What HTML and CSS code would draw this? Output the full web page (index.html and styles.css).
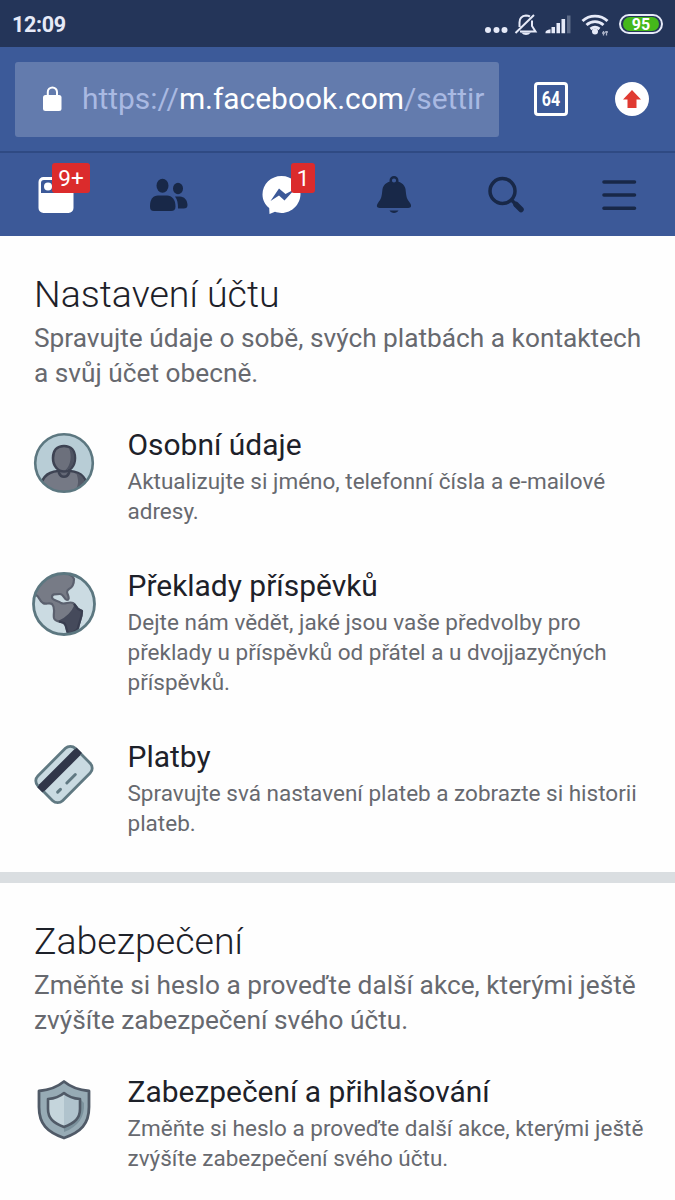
FILE: index.html
```html
<!DOCTYPE html>
<html lang="cs">
<head>
    <meta charset="UTF-8">
    <meta name="viewport" content="width=device-width, initial-scale=1.0">
    <title>Nastavení účtu</title>
    <link rel="stylesheet" href="styles.css">
</head>
<body>
    <div class="status-bar">
        <span class="time">12:09</span>
        <svg class="status-icons" width="136" height="30" viewBox="483 8 136 30">
            <g fill="#e6eaf8">
                <circle cx="488" cy="29" r="3"/><circle cx="496.500" cy="29" r="3"/><circle cx="504.500" cy="29" r="3"/>
                <path d="M545.500 32.300v-1q0-2 5-3v4zM551.500 26h3.500v6.300h-3.500zM556.500 22h3.500v10.300h-3.500zM561.500 18h3.600v14.300h-3.600z"/>
                <path d="M567 14.500h3.500v17.800H567z" opacity=".3"/>
                <path d="M521 31.500h10q-5 5-10 0z"/>
                <circle cx="595" cy="30.500" r="3"/>
            </g>
            <g fill="none" stroke="#e6eaf8" stroke-width="2">
                <path d="M515.500 32l18.500-18M519.500 26v-4.500c0-4 2-6.500 6.500-7 1.500 0 3 .5 4 1M532 19.500V25l3.500 5.500H520"/>
                <path d="M582.500 20c7-6.500 18-6.500 25 0M586.500 24c5-4.500 12-4.500 17 0M590.500 28q4.500-3.500 9 0" stroke-width="2.900"/>
                <path d="M603.500 30v4.500M606.500 30v4.500M602 32h3M605 31h3" stroke-width="1.300" opacity=".7"/>
            </g>
        </svg>
        <span class="battery"><span>95</span></span>
    </div>

    <div class="browser-bar">
        <div class="address">
            <svg class="lock" width="20" height="26" viewBox="0 0 20 26">
                <rect x="1" y="9" width="18.500" height="16" rx="2.500" fill="#fff"/>
                <path d="M5.800 10V6a4.600 4.600 0 0 1 9.200 0v4" fill="none" stroke="#fff" stroke-width="2"/>
            </svg>
            <span class="url">https://<b>m.facebook.com</b>/settir</span>
        </div>
        <span class="tabs"><span>64</span></span>
        <span class="update">
            <svg width="34" height="34" viewBox="0 0 34 34">
                <circle cx="17" cy="17" r="17" fill="#fff"/>
                <path d="M17 8l9 9.500h-4.500V26h-9v-8.500H8z" fill="#e03a31"/>
            </svg>
        </span>
    </div>

    <div class="nav">
        <div class="nav-item">
            <svg width="40" height="40" viewBox="0 0 40 40">
                <path fill="#fff" fill-rule="evenodd" d="M7.500 2h25a5 5 0 0 1 5 5v26a5 5 0 0 1-5 5h-25a5 5 0 0 1-5-5V7a5 5 0 0 1 5-5zM8 5q-3 0-3 3v10h30V8q0-3-3-3z"/>
                <circle cx="12" cy="11.500" r="4" fill="#fff"/>
            </svg>
            <span class="badge badge-feed">9+</span>
        </div>
        <div class="nav-item">
            <svg width="40" height="40" viewBox="0 0 40 40" fill="#182848">
                <ellipse cx="13.500" cy="10.800" rx="6" ry="7"/>
                <path d="M1 31.500C1 24 4 20.500 9 20.500h9c5 0 8.500 4 8.500 11 0 3-1.500 4.500-4.500 4.500H5c-3 0-4-1.500-4-4.500z"/>
                <ellipse cx="29" cy="13.500" rx="5" ry="5.700"/>
                <path d="M26 21.500h5c4 0 7.500 3.500 7.500 8.500 0 2.500-1.200 3.500-4 3.500h-5.500c0-5-.5-9-3-12z"/>
            </svg>
        </div>
        <div class="nav-item">
            <svg width="40" height="40" viewBox="0 0 40 40">
                <path fill="#fff" d="M20.500 1c10.500 0 19 8 19 18s-8.500 19-19 19c-2.500 0-4.500-.5-6.500-1.200L8.500 39l-.3-6C4 29.500 1.500 25 1.500 19.500 1.500 9 10 1 20.500 1z"/>
                <path fill="#3c5998" d="M9.500 26L18 13.500l6.500 5.500 9.500-5-10.500 11.500-5.500-5z"/>
            </svg>
            <span class="badge badge-messages">1</span>
        </div>
        <div class="nav-item">
            <svg width="40" height="40" viewBox="0 0 40 40">
                <path fill="#182848" d="M8.500 14C9.500 9 14 6 20 6s10.500 3 11.500 8c1 9 1 9 4.500 14 2.500 4 .5 5-3 5H7c-3.500 0-5.500-1-3-5 3.500-5 3.500-5 4.500-14zM15.500 35.500h9c-1.500 3.300-7.500 3.300-9 0z"/>
                <circle cx="20" cy="5.500" r="3.300" fill="#3c5998" stroke="#182848" stroke-width="2.400"/>
            </svg>
        </div>
        <div class="nav-item">
            <svg width="40" height="40" viewBox="0 0 40 40" fill="none" stroke="#182848" stroke-linecap="round">
                <circle cx="16.500" cy="16" r="12.500" stroke-width="3.500"/>
                <path d="M26 25.500l3 3" stroke-width="3.500"/>
                <path d="M30 29.500l5 5" stroke-width="5.500"/>
            </svg>
        </div>
        <div class="nav-item">
            <svg width="40" height="40" viewBox="0 0 40 40">
                <path d="M5 7h30.500M5 20h30.500M5 33.300h30.500" stroke="#182848" stroke-width="3.600" stroke-linecap="round"/>
            </svg>
        </div>
    </div>

    <div class="section">
        <h1>Nastavení účtu</h1>
        <p class="lead">Spravujte údaje o sobě, svých platbách a kontaktech<br>a svůj účet obecně.</p>

        <div class="item">
            <svg class="icon" viewBox="0 0 64 64">
                <clipPath id="face"><circle cx="32" cy="32" r="28.500"/></clipPath>
                <circle cx="32" cy="32" r="28.500" fill="#b8cdd6"/>
                <g clip-path="url(#face)" stroke="#3e4353" stroke-width="2.600">
                    <path fill="#757985" d="M8 62c0-14 6-21 18-22h12c12 1 18 8 18 22z"/>
                    <path fill="#555967" stroke="none" d="M44 42c7 2 10 8 10 19H42c5-5 5-13 2-19z"/>
                    <path fill="#646876" d="M27 37v5c2 5 8 5 10 0v-5z"/>
                    <path fill="#6c707c" d="M32 15c7 0 11 4.500 11 12 0 8-5 13.500-11 13.500S21 35 21 27c0-7.500 4-12 11-12z"/>
                    <path fill="#4d5261" stroke="none" d="M37 17c3.500 2 5 5 5 10 0 7-4 11.500-9 12.500 6-5 7-15 4-22.500z"/>
                </g>
                <circle cx="32" cy="32" r="28.800" fill="none" stroke="#5c7780" stroke-width="2.600"/>
            </svg>
            <div class="item-text">
                <h2>Osobní údaje</h2>
                <p>Aktualizujte si jméno, telefonní čísla a e-mailové<br>adresy.</p>
            </div>
        </div>

        <div class="item">
            <svg class="icon" viewBox="0 0 64 64">
                <clipPath id="globe"><circle cx="32" cy="32" r="30"/></clipPath>
                <circle cx="32" cy="32" r="30" fill="#cbdbe2"/>
                <g clip-path="url(#globe)" stroke-width="2.200" stroke-linejoin="round">
                    <path fill="#777b86" stroke="#5b606e" d="M0 20L20-1h14C34 3 41 2 42 7c0 5-1 8-5 10-3 2-2 4-1 6 1 3 1 5-1 5-3 0-3-6-7-6-5 0-8 0-8 3 0 4 6 3 9 6 4 2 8-2 12 0 2 1 3 4 5 6l4 2c0 7-3 11-4 17-1 4-6 3-8 7-5-3-2-9-6-12-4-2-9-1-10-5-1-5 2-10-2-14-3-2-6 1-9-1-4-2-3-6-7-8z"/>
                    <path fill="#454a5b" stroke="none" d="M43 32l3 5 4 2c0 7-3 11-4 17-1 4-6 3-8 7-5-3-2-9-6-12l-6-2q12-5 17-17z"/>
                    <path fill="none" stroke="#393e50" d="M42 32l4 5 4 2c0 7-3 11-4 17-1 4-6 3-8 7-5-3-2-9-6-12l-5-1.500"/>
                </g>
                <circle cx="32" cy="32" r="30.500" fill="none" stroke="#5c7780" stroke-width="2.800"/>
            </svg>
            <div class="item-text">
                <h2>Překlady příspěvků</h2>
                <p>Dejte nám vědět, jaké jsou vaše předvolby pro<br>překlady u příspěvků od přátel a u dvojjazyčných<br>příspěvků.</p>
            </div>
        </div>

        <div class="item">
            <svg class="icon" viewBox="0 0 64 64">
                <g transform="translate(32 31.500) rotate(-45)">
                    <rect x="-26.500" y="-17.500" width="53" height="35" rx="7" fill="#c9dae1"/>
                    <path fill="#303649" d="M-26.500-10.500h53v8.500h-53z"/>
                    <rect x="-26.500" y="-17.500" width="53" height="35" rx="7" fill="none" stroke="#607982" stroke-width="2.800"/>
                    <path fill="#303649" d="M-27.900-10h4v7.500h-4zM23.900-10h4v7.500h-4z"/>
                    <path d="M-17 8h4M-4 8h12" stroke="#607982" stroke-width="3" stroke-linecap="round"/>
                </g>
            </svg>
            <div class="item-text">
                <h2>Platby</h2>
                <p>Spravujte svá nastavení plateb a zobrazte si historii<br>plateb.</p>
            </div>
        </div>
    </div>

    <div class="section">
        <h1>Zabezpečení</h1>
        <p class="lead">Změňte si heslo a proveďte další akce, kterými ještě<br>zvýšíte zabezpečení svého účtu.</p>

        <div class="item">
            <svg class="icon" viewBox="0 0 64 64">
                <path fill="#97abb5" d="M32 3.500c6 5 14 8.500 25 9.500v16c0 17-8 25-25 31C15 54 7 46 7 29V13C18 12 26 8.500 32 3.500z"/>
                <path fill="#7b919c" d="M48 21l4 4c1 14-6 24-20 29v-5c11-4 16-9 16-18z"/>
                <path fill="none" stroke="#505a67" stroke-width="2.800" stroke-linejoin="round" d="M32 3.500c6 5 14 8.500 25 9.500v16c0 17-8 25-25 31C15 54 7 46 7 29V13C18 12 26 8.500 32 3.500z"/>
                <path fill="#c5d5dc" d="M32 15c4 3.500 9 5.500 16 6v10c0 9-5 14-16 18-11-4-16-9-16-18V21c7-.5 12-2.500 16-6z"/>
                <path fill="#b0c3cd" d="M32 15c4 3.500 9 5.500 16 6v10c0 9-5 14-16 18z"/>
                <path fill="none" stroke="#505a67" stroke-width="2.600" stroke-linejoin="round" d="M32 15c4 3.500 9 5.500 16 6v10c0 9-5 14-16 18-11-4-16-9-16-18V21c7-.5 12-2.500 16-6z"/>
            </svg>
            <div class="item-text">
                <h2>Zabezpečení a přihlašování</h2>
                <p>Změňte si heslo a proveďte další akce, kterými ještě<br>zvýšíte zabezpečení svého účtu.</p>
            </div>
        </div>
    </div>
</body>
</html>
```

FILE: styles.css
```css
* {
    box-sizing: border-box;
}
body {
    margin: 0;
    height: 1200px;
    overflow: hidden;
    background: #fefefe;
    color: #1d2129;
    font-family: Roboto, sans-serif;
}
h1, h2, p {
    margin: 0;
    white-space: nowrap;
}
svg {
    display: block;
    flex: none;
}

/* status bar */
.status-bar {
    display: flex;
    align-items: center;
    height: 47px;
    padding: 0 12px;
    background: #243559;
    color: #e6eaf8;
}
.time {
    font-size: 21.500px;
    font-weight: 700;
    line-height: 47px;
    padding-top: 2px;
    letter-spacing: -0.3px;
}
.status-icons {
    margin-left: auto;
}
.battery {
    width: 44px;
    height: 20px;
    padding: 1px 2px;
    border: 2px solid #e6eaf8;
    border-radius: 10px;
}
.battery span {
    display: block;
    height: 14px;
    border-radius: 7px;
    background: #45b81b;
    color: white;
    font-size: 16px;
    font-weight: 700;
    line-height: 15px;
    text-align: center;
}

/* address bar */
.browser-bar {
    display: flex;
    align-items: center;
    height: 106px;
    padding: 0 26px 0 15px;
    background: #3c5a99;
    border-bottom: 2px solid #2f4a83;
}
.address {
    display: flex;
    align-items: center;
    width: 484px;
    height: 75px;
    padding: 0 10px 0 27px;
    border-radius: 3px;
    background: #637bad;
}
.url {
    flex: 1;
    margin-left: 20px;
    color: #a9b9e2;
    font-size: 29.900px;
    line-height: 40px;
    white-space: nowrap;
}
.url b {
    color: white;
    font-weight: 400;
}
.tabs {
    width: 34px;
    height: 34px;
    margin-left: 35px;
    border: 3px solid white;
    border-radius: 4px;
    color: white;
    font-size: 20px;
    font-weight: 700;
    line-height: 29px;
    text-align: center;
}
.tabs span {
    display: block;
    transform: scaleX(0.8);
}
.update {
    margin-left: auto;
}

/* tabs of the site */
.nav {
    display: grid;
    grid-template-columns: repeat(6, 1fr);
    height: 83px;
    background: #3c5998;
}
.nav-item {
    position: relative;
    display: flex;
    align-items: center;
    justify-content: center;
}
.badge {
    position: absolute;
    top: 10px;
    height: 30px;
    border-radius: 3px;
    background: #db2b2c;
    color: white;
    font-size: 22.500px;
    line-height: 31px;
    text-align: center;
}
.badge-feed {
    left: 52px;
    width: 38px;
}
.badge-messages {
    left: 66px;
    width: 24px;
}

/* settings */
.section {
    padding: 36px 0 33px 34px;
}
.section + .section {
    border-top: 11px solid #dadee1;
}
h1 {
    font-size: 37.500px;
    font-weight: 300;
    line-height: 44px;
}
.lead {
    margin-top: 5px;
    color: #67696f;
    font-size: 26.250px;
    line-height: 35px;
}
.item {
    display: flex;
    margin-top: 42px;
}
.lead + .item {
    margin-top: 37px;
}
.icon {
    width: 64px;
    height: 64px;
    margin: 3px 31.500px 0 -2px;
}
h2 {
    margin-bottom: 5px;
    font-size: 29.950px;
    font-weight: 400;
    line-height: 33px;
}
.item-text p {
    margin-bottom: 1px;
    color: #67696f;
    font-size: 22.500px;
    line-height: 30px;
}
```
